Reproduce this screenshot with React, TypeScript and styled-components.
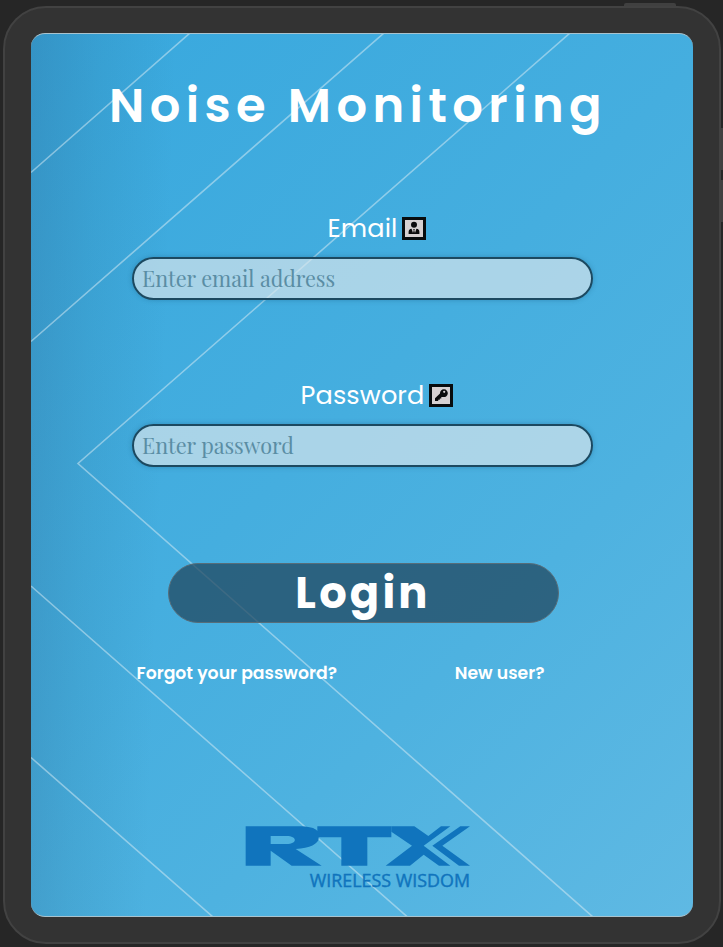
import React from 'react';
import styled, { createGlobalStyle } from 'styled-components';

const GlobalStyle = createGlobalStyle`
  * { box-sizing: border-box; }
  body { margin: 0; background: #262626; overflow: hidden; }
`;

const sans = `Poppins, Inter, 'Open Sans', sans-serif`;

const Stage = styled.div`
  position: relative;
  width: 723px;
  height: 947px;
  padding: 6px 0 0 3px;
  background: #262626;
  overflow: hidden;
  font-family: ${sans};
`;

const HardwareButton = styled.i<{ $x: number; $y: number; $w: number; $h: number }>`
  position: absolute;
  left: ${p => p.$x}px;
  top: ${p => p.$y}px;
  width: ${p => p.$w}px;
  height: ${p => p.$h}px;
  background: #404040;
  border-radius: 2px;
`;

const Device = styled.div`
  position: relative;
  width: 718px;
  height: 938px;
  padding: 25px 26px;
  border: 2px solid #424242;
  border-radius: 43px;
  background: #333;
`;

const Screen = styled.main`
  position: relative;
  isolation: isolate;
  display: flex;
  flex-direction: column;
  align-items: center;
  width: 662px;
  height: 884px;
  overflow: hidden;
  border-radius: 14px;
  border-top: 1px solid #a9c3ce;
  border-bottom: 1px solid #a9c3ce;
  color: #fff;
  background:
    linear-gradient(92deg, rgba(44, 100, 140, 0.3), rgba(44, 110, 145, 0.15) 10%, rgba(44, 120, 150, 0) 21%),
    linear-gradient(135deg, #38a8de 0%, #45aedf 45%, #4eb2e0 68%, #5fb9e3 100%);
`;

const Rays = styled.svg`
  position: absolute;
  z-index: -1;
  left: 0;
  top: -1px;
  width: 662px;
  height: 884px;
`;

const Title = styled.h1`
  margin: 42px 8px 0 0;
  height: 60px;
  font-size: 48px;
  line-height: 60px;
  font-weight: 600;
  letter-spacing: 5.4px;
  white-space: nowrap;
`;

const Field = styled.label<{ $top: number }>`
  display: flex;
  flex-direction: column;
  align-items: center;
  margin-top: ${p => p.$top}px;
`;

const FieldCaption = styled.span`
  display: flex;
  align-items: center;
  gap: 5px;
  height: 40px;
  margin-left: 30px;
`;

const FieldName = styled.span`
  font-size: 25.6px;
  line-height: 40px;
  font-weight: 400;
  letter-spacing: 0.1px;
`;

const IconFrame = styled.span`
  display: flex;
  align-items: center;
  justify-content: center;
  width: 24px;
  height: 23px;
  border: 3px solid #080c0e;
  background: #d6d0d1;
`;

const TextInput = styled.input`
  width: 461px;
  height: 43px;
  margin: 9px 0 0 1px;
  padding: 0 8px 1px;
  border: 2px solid #1c4960;
  border-radius: 22px;
  outline: none;
  background: rgba(218, 230, 236, 0.68);
  box-shadow: 0 0 5px rgba(20, 80, 115, 0.35);
  font: 21.6px 'Playfair Display', 'Liberation Serif', serif;
  &::placeholder { color: #5a8da4; opacity: 1; }
`;

const LoginButton = styled.button`
  width: 391px;
  height: 60px;
  margin: 96px 0 0 2px;
  padding: 1px 0 0;
  border: 1px solid #576d79;
  border-radius: 31px;
  background: rgba(34, 72, 96, 0.75);
  color: #fff;
  font-family: inherit;
  font-size: 43.2px;
  line-height: 57px;
  font-weight: 700;
  letter-spacing: 3.2px;
`;

const Links = styled.nav`
  display: flex;
  justify-content: space-between;
  width: 408px;
  margin: 37px 43px 0 0;
`;

const TextLink = styled.a`
  font-size: 17.28px;
  line-height: 26px;
  font-weight: 600;
  white-space: nowrap;
`;

const Logo = styled.svg`
  width: 245px;
  height: 90px;
  margin: 124px 0 0 -9px;
  flex: none;
`;

const PersonIcon = () => (
  <svg width="12" height="14" viewBox="0 0 12 14" fill="#0b0b0c">
    <circle cx="6" cy="3.8" r="3" />
    <path d="M.6 13v-2c0-2 1-3 3-3.2L5 12l.7-2.5L5.2 8h1.6l-.5 1.5L7 12l1.4-4.2c2 .2 3 1.2 3 3.2v2z" />
  </svg>
);

const KeyIcon = () => (
  <svg width="14" height="14" viewBox="0 0 14 14">
    <path d="M1 10.3 6 5.5A3.9 3.9 0 1 1 9 9H7.3v1.4H5.8v1.4H4.2V13H1z" fill="#0b0b0c" />
    <circle cx="10.2" cy="3.8" r="1.1" fill="#d6d0d1" />
  </svg>
);

export default function App() {
  return (
    <>
      <GlobalStyle />
      <Stage>
        <HardwareButton $x={624} $y={3} $w={52} $h={8} />
        <HardwareButton $x={719} $y={128} $w={8} $h={42} />
        <HardwareButton $x={719} $y={180} $w={8} $h={42} />
        <Device>
          <Screen>
            <Rays viewBox="31 33 662 884" fill="none" stroke="#d5eaf3" strokeOpacity=".52" strokeWidth="1.6">
              <path d="M31 172.500 190 33M31 341.500 384 33M570 33 78 463.500 593 917M31 586 407.500 917M31 757.500 213 917" />
            </Rays>
            <Title>Noise Monitoring</Title>
            <Field $top={72}>
              <FieldCaption>
                <FieldName>Email</FieldName>
                <IconFrame><PersonIcon /></IconFrame>
              </FieldCaption>
              <TextInput type="email" placeholder="Enter email address" />
            </Field>
            <Field $top={75}>
              <FieldCaption>
                <FieldName>Password</FieldName>
                <IconFrame><KeyIcon /></IconFrame>
              </FieldCaption>
              <TextInput type="password" placeholder="Enter password" />
            </Field>
            <LoginButton>Login</LoginButton>
            <Links>
              <TextLink>Forgot your password?</TextLink>
              <TextLink>New user?</TextLink>
            </Links>
            <Logo viewBox="0 0 735 270" fill="#1074bd">
              <path d="M32 49H188C222 49 240 54 247 63V49H469V82H397V167H319V82H251C253 101 226 114 182 117L260 167H170L107 122V167H32ZM107 78V102H154C188 102 188 78 154 78Z" fillRule="evenodd" />
              <path d="M469 49H538L580 78 618 49H646L566 107 646 167H612L566 134 525 167H452L531 107 469 65Z" />
              <path d="M676 49H705L622 107 705 167H672L592 107Z" />
              <text
                x="224"
                y="232"
                fontFamily="'Open Sans', sans-serif"
                fontSize="52"
                stroke="#1074bd"
                strokeWidth="1.2"
                textLength="481"
                lengthAdjust="spacingAndGlyphs"
              >
                WIRELESS WISDOM
              </text>
            </Logo>
          </Screen>
        </Device>
      </Stage>
    </>
  );
}
